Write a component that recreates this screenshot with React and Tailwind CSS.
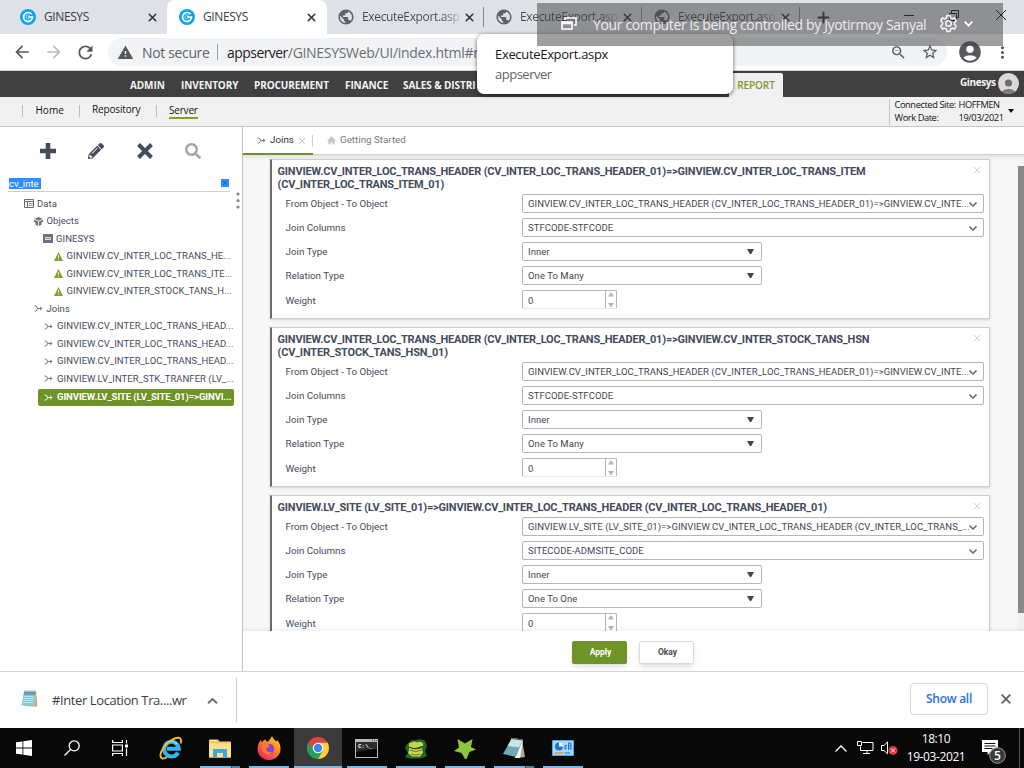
import React from "react";
import { LuX, LuPlus } from "react-icons/lu";
import { FaPencilAlt, FaSearch, FaTimes } from "react-icons/fa";
import {
  MdArrowBack, MdArrowForward, MdRefresh, MdWarning, MdStarBorder, MdAccountCircle, MdMoreVert, MdPublic, MdZoomOut,
} from "react-icons/md";

const OS = "font-['Open_Sans','Noto_Sans',sans-serif]";

function GLogo() {
  return (
    <svg viewBox="0 0 16 16" className="w-4 h-4 shrink-0">
      <circle cx="8" cy="8" r="8" fill="#0aa5f2" />
      <path d="M11.600 5.300A4.500 4.500 0 1 0 12.500 8H8" fill="none" stroke="#fff" strokeWidth="1.700" />
      <path d="M9.600 6.400A2.200 2.200 0 1 0 9.600 9.600" fill="none" stroke="#bfe8fc" strokeWidth="0.800" />
    </svg>
  );
}

function BrowserTab({ kind }) {
  const g = kind !== "export";
  return (
    <div className={"relative flex h-[34px] shrink-0 items-center pl-[11px] " + (g ? "w-[159px]" : "w-[158px]")}>
      {g ? <GLogo /> : <MdPublic className="w-[18px] h-[18px] -mx-px shrink-0 text-[#5f6368]" />}
      {g ? (
        <span className="ml-2 w-[99px] text-[12px] tracking-[-0.4px] text-[#3c4043]">GINESYS</span>
      ) : (
        <span className="ml-2 w-[98px] whitespace-nowrap text-[12px] tracking-[-0.350px] bg-gradient-to-r from-[#45494d] from-82% to-[#c4c7cb] bg-clip-text text-transparent">
          ExecuteExport.asp
        </span>
      )}
      <LuX className="ml-[3px] w-[13px] h-[13px] shrink-0 text-[#303336]" strokeWidth={2.9} />
      {!g && <div className="ml-[7px] h-5 w-px bg-[#84888d]" />}
    </div>
  );
}

function TabStrip() {
  return (
    <div className="flex h-[34px] shrink-0 bg-[#dee1e6] pl-[9px]">
      <BrowserTab kind="app" />
      <div className="-ml-px rounded-t-[8px] bg-white pl-px">
        <BrowserTab kind="active" />
      </div>
      <BrowserTab kind="export" />
      <BrowserTab kind="export" />
      <BrowserTab kind="export" />
      <div className="flex flex-1 items-center pl-[14px] text-[#303336]">
        <LuPlus className="w-[17px] h-[17px]" strokeWidth={2.8} />
        <svg viewBox="0 0 110 14" className="ml-[67px] mb-[4px] h-[14px] w-[110px]" fill="none" stroke="#111" strokeWidth="1">
          <path d="M5 7.500h10M50.500 5.500h7v7h-7zM52.500 5.500v-3h7v7h-2M97 2l10 10M107 2l-10 10" />
        </svg>
      </div>
    </div>
  );
}

function AddressBar() {
  return (
    <div className="flex h-[37px] shrink-0 items-center border-b border-[#d3d6d4] bg-white pl-[12px] text-[#55595e]">
      <MdArrowBack className="w-5 h-5" />
      <MdArrowForward className="ml-3 w-5 h-5 text-[#b8babd]" />
      <MdRefresh className="ml-[11px] w-[21px] h-[21px]" />
      <div className="ml-[12px] flex h-7 w-[839px] items-center rounded-full bg-[#f1f3f4] pl-[9px] text-[14px]">
        <MdWarning className="w-[17px] h-[17px]" />
        <span className="ml-[8px] w-[75px] whitespace-nowrap tracking-[-0.350px] text-[#5f6368]">Not secure</span>
        <div className="h-4 w-px bg-[#9a9da1]" />
        <div className="ml-[9px] w-[663px] overflow-hidden whitespace-nowrap tracking-[-0.3px] text-[#6a6e73]">
          <span className="tracking-[-0.55px] text-[#202124]">appserver</span>/GINESYSWeb/UI/index.html#r
        </div>
        <MdZoomOut className="w-[17px] h-[17px]" />
        <MdStarBorder className="ml-[14px] w-[18px] h-[18px]" />
      </div>
      <MdAccountCircle className="ml-[10px] w-[26px] h-[26px]" />
      <MdMoreVert className="ml-[10px] w-[19px] h-[19px]" />
    </div>
  );
}

const MENU = [
  ["ADMIN", "w-[51px]"],
  ["INVENTORY", "w-[73px]"],
  ["PROCUREMENT", "w-[91px]"],
  ["FINANCE", "w-[58px]"],
  ["SALES & DISTRI", "w-[326px]"],
];

function Avatar() {
  return (
    <svg viewBox="0 0 21 21" className="-mt-[2px] w-[21px] h-[21px]">
      <clipPath id="av"><circle cx="10.500" cy="10.500" r="10.500" /></clipPath>
      <g clipPath="url(#av)">
        <rect width="21" height="21" fill="#d9d9d9" />
        <circle cx="10.500" cy="10" r="3.600" fill="#6d6d6d" />
        <ellipse cx="10.500" cy="20" rx="7" ry="4" fill="#7a7a7a" />
      </g>
    </svg>
  );
}

function MenuBar() {
  return (
    <div className="flex h-[26px] shrink-0 items-center bg-[#404040] pl-[130px] text-[10px] font-bold text-[#f4f4f4]">
      {MENU.map(([t, w]) => (
        <span key={t} className={"mt-[2px] overflow-hidden whitespace-nowrap tracking-[-0.1px] " + w}>{t}</span>
      ))}
      <div className="mt-[2px] flex h-6 w-[54px] items-center justify-center rounded-t-[2px] bg-[#f1f1f1] font-semibold tracking-[-0.1px] text-[#76982e]">REPORT</div>
      <span className="ml-[177px] w-[38px] -mt-[3px] tracking-[-0.400px]">Ginesys</span>
      <Avatar />
    </div>
  );
}

function SubMenu() {
  const sep = "h-3 w-px bg-[#bdbdbd] mb-[1px] shrink-0";
  return (
    <div className="flex h-[30px] shrink-0 items-center border-b border-[#c6c6c6] bg-[#f1f1f1] pl-[22px] text-[10px] leading-[13px] text-[#111]">
      <div className={sep} />
      <span className="ml-[12.500px] w-[43.500px] shrink-0 -mt-[3px]">Home</span>
      <div className={sep} />
      <span className="ml-[12px] w-[64px] shrink-0 -mt-[5px] tracking-[-0.15px]">Repository</span>
      <div className={sep} />
      <span className="ml-[12px] w-[29px] shrink-0 border-b-2 border-[#7da22d] tracking-[-0.2px]">Server</span>
      <div className="ml-[691px] h-[26px] w-px shrink-0 bg-[#c4c4c4]" />
      <div className="ml-[4.500px] mb-[2px] w-[113.500px] shrink-0 text-[9.250px] tracking-[-0.4px] whitespace-nowrap">
        <div className="flex"><span className="w-[64px]">Connected Site:</span>HOFFMEN</div>
        <div className="flex"><span className="w-[64px]">Work Date:</span>19/03/2021</div>
      </div>
      <svg viewBox="0 0 6 4" className="mt-[-2px] h-[4px] w-[6px] shrink-0"><path d="M0 0h6L3 4z" fill="#111" /></svg>
    </div>
  );
}

function JoinIcon({ c = "#747a89" }) {
  return (
    <svg viewBox="0 0 9 7" className="h-[7px] w-[9px] shrink-0" fill="none" stroke={c} strokeWidth="1">
      <path d="M0.500 1H1.600Q3.500 1.500 3.500 3.500T1.600 6H0.500M3.500 3.500H8.300M6 1.800l2 1.700-2 1.700" />
    </svg>
  );
}

function TreeIcon({ kind }) {
  if (kind === "join") return <JoinIcon />;
  if (kind === "joinSel") return <JoinIcon c="#fff" />;
  if (kind === "warn")
    return (
      <svg viewBox="0 0 9 9" className="h-[9px] w-[9px] shrink-0">
        <path d="M4.500 0L9 9H0z" fill="#7ba32c" />
        <path d="M4.500 3.200v2.600M4.500 6.800v1" stroke="#fff" strokeWidth="0.900" />
      </svg>
    );
  if (kind === "table")
    return (
      <svg viewBox="0 0 10 9" className="h-[9px] w-[10px] shrink-0" fill="none" stroke="#666c7c">
        <path d="M0.500 0.500h9v8h-9zM0.500 2.500h9M3.500 2.500v6" />
        <path d="M5 4.500h4M5 6.500h4" strokeDasharray="1.500 .7" />
      </svg>
    );
  if (kind === "cube")
    return (
      <svg viewBox="0 0 9 9" className="h-[9px] w-[9px] shrink-0">
        <path d="M4.500 0L8.500 1.800 4.500 3.700 0.500 1.800zM0 2.600L4.100 4.500V9L1.500 7.700V5.500L0 5zM9 2.600L4.900 4.500V9L7.500 7.700V5.500L9 5z" fill="#6c7282" />
      </svg>
    );
  return (
    <svg viewBox="0 0 10 9" className="h-[9px] w-[10px] shrink-0">
      <rect width="10" height="9" fill="#6c7282" />
      <rect x="2.500" y="3.500" width="5" height="2" rx=".5" fill="none" stroke="#fff" strokeWidth=".9" />
    </svg>
  );
}

const TREE = [
  ["pl-[24px]", "gap-[3px]", "table", "Data"],
  ["pl-[34px]", "gap-[3.500px]", "cube", "Objects"],
  ["pl-[43px]", "gap-[3px]", "box", "GINESYS"],
  ["pl-[54px]", "gap-[3.500px]", "warn", "GINVIEW.CV_INTER_LOC_TRANS_HE..."],
  ["pl-[54px]", "gap-[3.500px]", "warn", "GINVIEW.CV_INTER_LOC_TRANS_ITE..."],
  ["pl-[54px]", "gap-[3.500px]", "warn", "GINVIEW.CV_INTER_STOCK_TANS_H..."],
  ["pl-[34px]", "gap-[3.500px]", "join", "Joins"],
  ["pl-[44px]", "gap-[4px]", "join", "GINVIEW.CV_INTER_LOC_TRANS_HEAD..."],
  ["pl-[44px]", "gap-[4px]", "join", "GINVIEW.CV_INTER_LOC_TRANS_HEAD..."],
  ["pl-[44px]", "gap-[4px]", "join", "GINVIEW.CV_INTER_LOC_TRANS_HEAD..."],
  ["pl-[44px]", "gap-[4px]", "join", "GINVIEW.LV_INTER_STK_TRANFER (LV_..."],
];

function Sidebar() {
  return (
    <div className="flex w-[243px] shrink-0 flex-col border-r border-[#c4c4c4] bg-white">
      <div className="flex h-[50px] items-center pb-[2px] pl-[40px] text-[#444b5d]">
        <svg viewBox="0 0 16 16" className="w-4 h-4" stroke="currentColor" strokeWidth="4.600"><path d="M8 0v16M0 8h16" /></svg>
        <FaPencilAlt className="ml-[32px] w-4 h-4" />
        <svg viewBox="0 0 16 16" className="ml-[33px] w-4 h-4" stroke="currentColor" strokeWidth="4"><path d="M1.500 1.500l13 13M14.500 1.500l-13 13" /></svg>
        <FaSearch className="ml-[32px] w-4 h-4 text-[#a3a7b0]" />
      </div>
      <div className="ml-2 mt-px flex h-[14px] w-[222px] items-center justify-between border-b border-[#cfcfcf] pb-[2px]">
        <span className="ml-px h-[11px] w-[32px] bg-[#308dff] text-[9.500px] leading-[12px] text-white">cv_inte</span>
        <span className="mr-px -mt-[2px] flex h-2 w-2 items-center justify-center bg-[#308dff] text-[#1b6fdc]"><FaTimes className="w-[6px] h-[6px]" /></span>
      </div>
      <div className="relative pt-[3.200px]">
        <svg viewBox="0 0 4 18" className="absolute left-[236px] top-0 h-[18px] w-[4px]" fill="#83838f">
          <circle cx="2" cy="2" r="1.600" /><circle cx="2" cy="8.500" r="1.600" /><circle cx="2" cy="15" r="1.600" />
        </svg>
        {TREE.map(([pad, gap, icon, text], i) => (
          <div key={i} className={"flex h-[17.500px] items-center whitespace-nowrap text-[9.500px] tracking-[0.040px] text-[#444b5d] " + pad + " " + gap}>
            <TreeIcon kind={icon} />
            <span>{text}</span>
          </div>
        ))}
        <div className="ml-[38px] mt-[1.300px] flex h-[17px] w-[196px] items-center gap-[4px] whitespace-nowrap rounded-[2px] bg-[#6e9329] pl-[6px] text-[9.500px] font-bold text-white">
          <TreeIcon kind="joinSel" />
          <span className="tracking-[-0.070px]">GINVIEW.LV_SITE (LV_SITE_01)=&gt;GINVI...</span>
        </div>
      </div>
    </div>
  );
}

function Row({ label, low, children }) {
  return (
    <div className="flex h-6 items-start pt-[3px]">
      <span className={"w-[236.500px] text-[9.800px] " + (low ? "leading-[21px]" : "leading-[20px]")}>{label}</span>
      {children}
    </div>
  );
}

const BOX = "flex h-[19px] items-center whitespace-nowrap rounded-[2px] border border-[#b3b6c0] bg-white pl-[5px] text-[9.500px] leading-[17px] tracking-[0.050px] text-[#3f4656] ";

function Wide({ children }) {
  return (
    <div className={BOX + "w-[462px]"}>
      <span className="w-[441px]">{children}</span>
      <svg viewBox="0 0 8 5" className="mt-px h-[5px] w-[8px] shrink-0" fill="none" stroke="#6c7282" strokeWidth="1.600"><path d="M0.500 0.500L4 4 7.500 0.500" /></svg>
    </div>
  );
}

function Select({ children }) {
  return (
    <div className={BOX + "w-[240px]"}>
      <span className="w-[219px]">{children}</span>
      <svg viewBox="0 0 7 5" className="h-[5px] w-[7px]"><path d="M0 0h7L4.200 5H2.800z" fill="#3f4656" /></svg>
    </div>
  );
}

function Spinner() {
  return (
    <div className={BOX + "w-[95px] border-b-[#e8e9ec]"}>
      <span className="w-[77px] pt-[2px]">0</span>
      <svg viewBox="0 0 11 17" className="h-[17px] w-[11px]" fill="#b3b6c0">
        <path d="M0 0h1v17H0zM3 5.500h6L6.500 1.500h-1zM3 12h6L6.500 16h-1z" />
      </svg>
    </div>
  );
}

const CARDS = [
  {
    title: ["GINVIEW.CV_INTER_LOC_TRANS_HEADER (CV_INTER_LOC_TRANS_HEADER_01)=>GINVIEW.CV_INTER_LOC_TRANS_ITEM", "(CV_INTER_LOC_TRANS_ITEM_01)"],
    from: "GINVIEW.CV_INTER_LOC_TRANS_HEADER (CV_INTER_LOC_TRANS_HEADER_01)=>GINVIEW.CV_INTE...",
    cols: "STFCODE-STFCODE",
    rel: "One To Many",
  },
  {
    title: ["GINVIEW.CV_INTER_LOC_TRANS_HEADER (CV_INTER_LOC_TRANS_HEADER_01)=>GINVIEW.CV_INTER_STOCK_TANS_HSN", "(CV_INTER_STOCK_TANS_HSN_01)"],
    from: "GINVIEW.CV_INTER_LOC_TRANS_HEADER (CV_INTER_LOC_TRANS_HEADER_01)=>GINVIEW.CV_INTE...",
    cols: "STFCODE-STFCODE",
    rel: "One To Many",
  },
  {
    title: ["GINVIEW.LV_SITE (LV_SITE_01)=>GINVIEW.CV_INTER_LOC_TRANS_HEADER (CV_INTER_LOC_TRANS_HEADER_01)"],
    from: "GINVIEW.LV_SITE (LV_SITE_01)=>GINVIEW.CV_INTER_LOC_TRANS_HEADER (CV_INTER_LOC_TRANS_...",
    cols: "SITECODE-ADMSITE_CODE",
    rel: "One To One",
  },
];

function ThinX({ c }) {
  return (
    <svg viewBox="0 0 6 6" className="h-[6px] w-[6px] shrink-0" stroke={c} strokeWidth="0.900"><path d="M0 0l6 6M6 0L0 6" /></svg>
  );
}

function JoinCard({ title, from, cols, rel }) {
  return (
    <div className="w-[720px] shrink-0 border border-l-2 border-[#cdcdcd] border-l-[#6b6b6b] bg-white pb-[7px] pl-[5.500px] pt-[5px] shadow-sm">
      <div className="flex justify-between pr-[9.500px]">
        <div className="whitespace-nowrap text-[11px] font-bold leading-[13px] tracking-[-0.190px] text-[#444b5d]">
          {title.map((l) => <div key={l}>{l}</div>)}
        </div>
        <div className="mt-[2px]"><ThinX c="#c9c9c9" /></div>
      </div>
      <div className="pl-[8px] text-[#444b5d]">
        <Row label="From Object - To Object"><Wide>{from}</Wide></Row>
        <Row label="Join Columns"><Wide>{cols}</Wide></Row>
        <Row label="Join Type"><Select>Inner</Select></Row>
        <Row label="Relation Type"><Select>{rel}</Select></Row>
        <Row label="Weight" low><Spinner /></Row>
      </div>
    </div>
  );
}

function Content() {
  return (
    <div className="flex flex-1 flex-col bg-white">
      <div className="flex h-[28px] shrink-0 border-b border-[#cfcfcf] text-[9.800px]">
        <div className="flex h-[28px] w-[70px] items-center border-b-2 border-[#6e9329] pl-[14px] pt-px text-[#2f3542]">
          <JoinIcon />
          <span className="ml-[4px] w-[29px]">Joins</span>
          <ThinX c="#c3c3c3" />
          <div className="ml-[7px] h-3 w-px bg-[#cfcfcf]" />
        </div>
        <div className="flex items-center pl-[14px] text-[#767a85]">
          <svg viewBox="0 0 9 9" className="mr-[4px] h-[9px] w-[9px]" fill="#c3c5cc"><path d="M4.500 0L9 5H7.500V8.500H5.500V6.500h-2v2h-2V5H0z" /></svg>
          Getting Started
        </div>
      </div>
      <div className="relative flex h-[476px] shrink-0 justify-between overflow-hidden bg-[#f7f7f7] pl-[27px] shadow-[inset_0_4px_4px_-2px_rgba(0,0,0,0.1)]">
        <div className="flex flex-col gap-2 pt-[4px]">
          {CARDS.map((c, i) => <JoinCard key={i} {...c} />)}
        </div>
        <div className="mt-[11px] w-[6px] bg-[#f1f1f1]">
          <div className="h-[447px] bg-[#888888]" />
        </div>
        <div className="absolute bottom-0 left-0 h-[4px] w-full bg-gradient-to-b from-transparent to-[rgba(0,0,0,0.06)]" />
      </div>
      <div className="flex flex-1 items-start gap-3 pl-[329px] pt-[10px] text-[8.500px] font-bold">
        <div className="flex h-[23px] w-[55px] items-center justify-center rounded-[2px] bg-[#6e9329] pl-[2px] text-white shadow-md">Apply</div>
        <div className="flex h-[23px] w-[55px] items-center justify-center rounded-[2px] border border-[#d9dbe0] bg-white pl-[2px] text-[#444b5d] shadow-md">Okay</div>
      </div>
    </div>
  );
}

function Notepad({ className }) {
  return (
    <svg viewBox="0 0 16 18" className={className}>
      <path d="M3 17h11.500L15.700 3v13.500z" fill="#8a7a55" />
      <path d="M3.500 2h12l-.5 14H3z" fill="#c9b98c" />
      <path d="M3 2h11.500l-1.500 13.500H0.500z" fill="#8cc8d6" />
      <path d="M3 2h11.500l-.3 3H2.600z" fill="#5aa7b8" />
      <path d="M3 6.500h10M2.700 8.500h10M2.400 10.500h10M2 12.500h10" stroke="#d5edf2" strokeWidth=".7" />
      <path d="M4 .5v2M6 .5v2M8 .5v2M10 .5v2M12 .5v2M14 .5v2" stroke="#456" strokeWidth=".8" />
    </svg>
  );
}

function Downloads() {
  return (
    <div className="flex h-[57px] shrink-0 items-center border-t border-[#d4d4d4] bg-white pl-[21px]">
      <Notepad className="h-[18px] w-[16px] mb-[2px]" />
      <span className="ml-[15px] mt-px w-[155px] whitespace-nowrap text-[13px] tracking-[-0.400px] text-[#3c4043]">#Inter Location Tra....wr</span>
      <svg viewBox="0 0 11 6" className="mt-px h-[6px] w-[11px]" fill="none" stroke="#6b6f74" strokeWidth="1.900"><path d="M1 5.300L5.500 1 10 5.300" /></svg>
      <div className="ml-[18px] h-[44px] w-px bg-[#c4c6c8]" />
      <div className="ml-[673px] mb-[2px] flex h-[32px] w-[78px] items-center justify-center rounded-[4px] border border-[#d4d7db] text-[12px] font-semibold tracking-[-0.250px] text-[#2a6ee8]">Show all</div>
      <svg viewBox="0 0 10 10" className="ml-[13px] mb-[2px] h-[10px] w-[10px]" stroke="#63676b" strokeWidth="1.900"><path d="M.7.7l8.600 8.600M9.300.7L.7 9.300" /></svg>
    </div>
  );
}

function Task({ active, split, open = true, children }) {
  return (
    <div className={"mr-px flex h-[40px] w-[48px] shrink-0 flex-col items-center " + (active ? "bg-[#3b3b3b]" : "")}>
      <div className="flex h-[38px] items-center pt-[2px]">{children}</div>
      {open && (
        <div className={"flex h-[2px] " + (active ? "w-full bg-[#76b9ed]" : "w-[40px] bg-[#76b9ed]")}>
          {split && <div className="ml-auto h-[2px] w-[9px] border-l border-[#2c4960] bg-[#4c83ad]" />}
        </div>
      )}
    </div>
  );
}

function Taskbar() {
  return (
    <div className="flex h-[40px] shrink-0 items-center bg-[#080808] text-white">
      <div className="flex w-[147px] shrink-0 items-center pl-4">
        <svg viewBox="0 0 16 16" className="h-4 w-4" fill="#fff"><path d="M0 2.300L6.500 1.400V7.600H0zM7.300 1.300L16 0V7.600H7.300zM0 8.400H6.500V14.600L0 13.700zM7.300 8.400H16V16L7.300 14.700z" /></svg>
        <svg viewBox="0 0 16 16" className="ml-[32px] h-4 w-4" fill="none" stroke="#fff" strokeWidth="1.300"><circle cx="10.200" cy="5.800" r="5" /><path d="M6.500 9.500L0.500 15.500" /></svg>
        <svg viewBox="0 0 16 16" className="ml-[32px] h-4 w-4" fill="none" stroke="#fff" strokeWidth="1.200"><path d="M.6 0v2.500h9.800V0M.6 5h9.800v6H.6zM.6 16v-2.500h9.800V16M14.500 0v3.500M14.500 8.500V16" /><path d="M13 4.500h3v3h-3z" fill="#fff" stroke="none" /></svg>
      </div>
      <Task open={false}>
        <svg viewBox="0 0 24 24" className="h-[24px] w-[24px]">
          <path d="M19 16.500A7.300 7.300 0 1 1 19.800 12.800H8" fill="none" stroke="#35b5ee" strokeWidth="4" />
          <path d="M6 10a7 7 0 0 1 12-2" fill="none" stroke="#9be2fb" strokeWidth="1.300" />
          <path d="M21.500 7.500C24 .5 18 0 10.500 5.500S-1 21 3 22.300C5 23 8 21 8 21" fill="none" stroke="#f2bd2c" strokeWidth="1.900" />
        </svg>
      </Task>
      <Task split>
        <svg viewBox="0 0 22 19" className="h-[19px] w-[22px]">
          <path d="M0 1.500Q0 .5 1 .5h8l1.500 2H21q1 0 1 1V18.500H0z" fill="#f3cb5d" />
          <path d="M0 4.500h22V17.500q0 1-1 1H1q-1 0-1-1z" fill="#fde08d" />
          <path d="M1.500 1.500h6" stroke="#fff3c0" />
          <path d="M4 18.500V11q0-1 1-1h12q1 0 1 1v7.500h-4V14H8v4.500z" fill="#3ca6dc" />
        </svg>
      </Task>
      <Task>
        <svg viewBox="0 0 24 24" className="h-[24px] w-[24px]">
          <defs><linearGradient id="ff" x1="1" y1="0" x2="0.300" y2="1"><stop offset="0" stopColor="#ffe033" /><stop offset=".45" stopColor="#ff8a1d" /><stop offset="1" stopColor="#f5246c" /></linearGradient></defs>
          <path d="M15 0c1 3 3 4 4.500 5.500l.5-1.500c3 3 3.500 6 3.500 9A11.500 11 0 0 1 .5 13C.5 9 2 6 4 3.500l.5 3C6 4.500 7.500 4.500 8 3l2 3c2-1 3.500-3 5-6z" fill="url(#ff)" />
          <circle cx="12" cy="13" r="5.200" fill="#8a3fd6" />
          <path d="M6 8.500c3-2 6-.5 6.500 1.500-1 2-3.500 1-3.500 3s2.500 3.500 5 3-2 4-6 1.500S4 11 6 8.500z" fill="#ff7a26" />
        </svg>
      </Task>
      <Task active>
        <svg viewBox="0 0 24 24" className="h-[24px] w-[24px]">
          <circle cx="12" cy="12" r="11" fill="#e0443a" />
          <path d="M2.500 6.500A11 11 0 0 0 12 23l5-8.500H7.500z" fill="#1da35a" />
          <path d="M12 23A11 11 0 0 0 21.600 6.700H12L17 14.500z" fill="#fdd03b" />
          <circle cx="12" cy="12" r="5.300" fill="#fff" /><circle cx="12" cy="12" r="4.200" fill="#4284f3" />
        </svg>
      </Task>
      <Task>
        <svg viewBox="0 0 23 19" className="mr-px h-[19px] w-[23px]">
          <rect width="23" height="19" fill="#b8bcbc" /><rect x="1" y="3" width="21" height="15" fill="#050505" /><path d="M1 3h21v7q-10 0-21 3z" fill="#2c2c2c" />
          <path d="M17 1.500h1M19 1.500h1M21 1.500h1" stroke="#444" />
          <text x="3" y="9" fontSize="6" fontWeight="700" fill="#fff" fontFamily="Liberation Mono, monospace">C:\_</text>
        </svg>
      </Task>
      <Task>
        <svg viewBox="0 0 24 20" className="mt-px h-[20px] w-[24px]">
          <path d="M6 3Q7 0 11 1.500 17-1 21 2l2 5-2 5 2 5-6 2.500H5L1 18l3-4L1 9l2-4z" fill="#1f6a22" />
          <path d="M5 7Q4 3 8 3.500q2-2 5 0 4-2 6 1 1 3-1 5l1 4-3 4H8l-4-3.500 1-3z" fill="#c6d353" />
          <path d="M5 8q6 3.500 14-.5" fill="none" stroke="#2c4715" strokeWidth="1.400" />
          <path d="M6 11q5 3 12 0M7 15q5 2 9 0" fill="none" stroke="#6b7f25" strokeWidth="1" />
        </svg>
      </Task>
      <Task>
        <svg viewBox="0 0 22 20" className="mt-px h-[20px] w-[22px]"><path d="M3.500 0l7.500 4.500L18.500 0 17 8l5 2.500-6.500 2.500-3 7h-1.500L7.500 14 0 12l5-3.500z" fill="#8cc640" /></svg>
      </Task>
      <Task split>
        <svg viewBox="0 0 23 22" className="h-[22px] w-[23px]">
          <path d="M19 3l3 17-7 1z" fill="#b8a892" /><path d="M11 2l9 1-3 18H12z" fill="#f2f6f7" />
          <path d="M9 1l11 1.500L13 20 0 17z" fill="#6fa9b6" /><path d="M9 1l11 1.500-4 8L4.500 9z" fill="#c5e5ea" /><path d="M9 1.500l11 1.500" stroke="#444" />
        </svg>
      </Task>
      <Task>
        <svg viewBox="0 0 22 16" className="h-[16px] w-[22px]">
          <rect width="22" height="16" rx="1" fill="#4aa8e8" /><rect x="1" y="1" width="20" height="14" fill="#a7dbfa" />
          <circle cx="7" cy="6.500" r="4" fill="#2174c7" /><path d="M7 6.500V2.500a4 4 0 0 1 4 4z" fill="#fff" />
          <path d="M13 10V5.500h2M16.500 10V3H19v7M16.500 5.500H19M16.500 8H19M13 8h2" fill="none" stroke="#2174c7" strokeWidth="1" />
          <path d="M3 13h8" stroke="#e8912a" strokeWidth="1.500" /><path d="M12.500 13h6" stroke="#2174c7" />
        </svg>
      </Task>
      <div className="ml-[247px] flex flex-1 items-center">
        <svg viewBox="0 0 12 7" className="h-[7px] w-[12px]" fill="none" stroke="#fff" strokeWidth="1.300"><path d="M.5 6.500L6 1l5.500 5.500" /></svg>
        <svg viewBox="0 0 17 14" className="ml-[10px] h-[14px] w-[17px]" fill="none" stroke="#fff"><path d="M5.500 1.500h10.500v8H3.500V5.500M.5 .5h4v4h-4zM10 9.500v3M6 12.500h7" /></svg>
        <svg viewBox="0 0 17 14" className="ml-[7px] h-[14px] w-[17px]">
          <path d="M.5 4.500H3L6.500.8v12L3 9.500H.5z" fill="none" stroke="#fff" /><circle cx="12" cy="9.500" r="4.500" fill="#d9363e" /><path d="M10 7.500l4 4M14 7.500l-4 4" stroke="#fff" />
        </svg>
        <div className="ml-[6px] w-[64px] whitespace-nowrap text-center text-[12px] leading-[18px] tracking-[-0.4px]">
          <div>18:10</div><div>19-03-2021</div>
        </div>
        <svg viewBox="0 0 26 26" className="ml-[14px] mt-[8px] h-[26px] w-[26px]">
          <path d="M0 1h16v12h-7l-3.500 3v-3H0z" fill="#fff" /><path d="M2.500 4.500h11M2.500 7h11M2.500 9.500h8" stroke="#111" />
          <circle cx="15.500" cy="16.500" r="7.800" fill="#3a3a3a" stroke="#999" />
          <text x="15.500" y="21" textAnchor="middle" fontSize="12" fontWeight="600" fill="#fff" fontFamily="Open Sans, sans-serif">5</text>
        </svg>
        <div className="ml-auto mr-[4px] h-[40px] w-px bg-[#555]" />
      </div>
    </div>
  );
}

export default function App() {
  return (
    <div className={"relative flex h-[768px] w-[1024px] flex-col overflow-hidden bg-white " + OS}>
      <TabStrip />
      <AddressBar />
      <MenuBar />
      <SubMenu />
      <div className="flex h-[544px] shrink-0 font-[Roboto,sans-serif]">
        <Sidebar />
        <Content />
      </div>
      <Downloads />
      <Taskbar />

      <div className="absolute left-[477px] top-[34px] h-[60px] w-[256px] rounded-[7px] bg-white pl-[18px] pt-[10px] shadow-[0_1px_4px_rgba(0,0,0,0.6)]">
        <div className="text-[13px] font-medium leading-[20px] tracking-[-0.320px] text-[#16181b]">ExecuteExport.aspx</div>
        <div className="text-[13px] leading-[20px] tracking-[-0.5px] text-[#5f6368]">appserver</div>
      </div>
      <div className="absolute left-[537px] top-[3px] flex h-[43px] w-[466px] items-center whitespace-nowrap bg-[rgba(66,66,66,0.51)] pl-[24px] text-[14px] text-[#ececec]">
        <svg viewBox="0 0 16 13" className="mb-[3px] h-[13px] w-[16px] shrink-0" fill="none" stroke="#fff" strokeWidth="1.600"><path d="M1 5h10v7H1zM1 6.500h10M4 3V1h11v7h-2" /></svg>
        <span className="ml-[16px] w-[346px] tracking-[-0.360px]">Your computer is being controlled by Jyotirmoy Sanyal</span>
        <svg viewBox="0 0 24 24" className="mb-[3px] h-[19px] w-[19px] shrink-0" fill="none" stroke="#f2f2f2" strokeWidth="2">
          <circle cx="12" cy="12" r="3.500" />
          <path d="M10 2h4l.7 3 2 1.100 3-1 2 3.500L19.500 11v2l2.200 2.400-2 3.500-3-1-2 1.100-.7 3h-4l-.7-3-2-1.100-3 1-2-3.500L4.500 13v-2L2.300 8.600l2-3.500 3 1 2-1.100z" />
        </svg>
        <svg viewBox="0 0 9 6" className="ml-[6px] mb-[1px] h-[6px] w-[9px] shrink-0" fill="none" stroke="#fff" strokeWidth="1.800"><path d="M.7.7l3.800 4L8.300.7" /></svg>
      </div>
    </div>
  );
}
